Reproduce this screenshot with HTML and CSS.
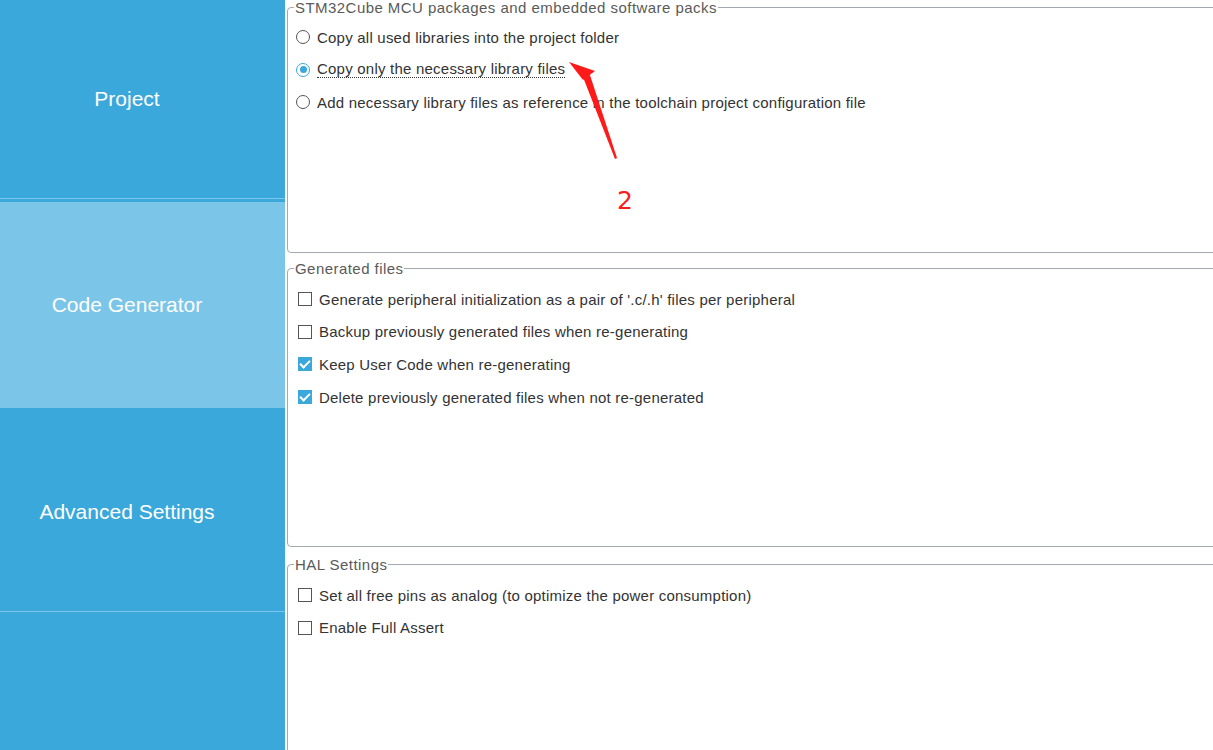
FILE: index.html
```html
<!DOCTYPE html>
<html lang="en">
<head>
  <meta charset="UTF-8">
  <title>Project Manager - Code Generator</title>
  <link rel="stylesheet" href="styles.css">
</head>
<body>
  <div class="app">
    <div class="sidebar">
      <div class="tab tab-project">Project</div>
      <div class="tab tab-active">Code Generator</div>
      <div class="tab tab-advanced">Advanced Settings</div>
      <div class="tab tab-rest"></div>
    </div>
    <div class="main">
      <fieldset class="group group-packs">
        <legend>STM32Cube MCU packages and embedded software packs</legend>
        <label class="row"><span class="radio"></span>Copy all used libraries into the project folder</label>
        <label class="row"><span class="radio on"></span><span class="focus">Copy only the necessary library files</span></label>
        <label class="row"><span class="radio"></span>Add necessary library files as reference in the toolchain project configuration file</label>
      </fieldset>
      <fieldset class="group group-files">
        <legend>Generated files</legend>
        <label class="row"><span class="check"></span>Generate peripheral initialization as a pair of '.c/.h' files per peripheral</label>
        <label class="row"><span class="check"></span>Backup previously generated files when re-generating</label>
        <label class="row"><span class="check on"></span>Keep User Code when re-generating</label>
        <label class="row"><span class="check on"></span>Delete previously generated files when not re-generated</label>
      </fieldset>
      <fieldset class="group group-hal">
        <legend>HAL Settings</legend>
        <label class="row"><span class="check"></span>Set all free pins as analog (to optimize the power consumption)</label>
        <label class="row"><span class="check"></span>Enable Full Assert</label>
      </fieldset>
      <svg class="note" width="80" height="170" viewBox="0 0 80 170">
        <polygon points="6,62 20,80 32,71" fill="#ff1a1a"/>
        <polygon points="18,72 25,69 54,158 52,159" fill="#ff1a1a"/>
      </svg>
      <div class="note-num">2</div>
    </div>
  </div>
</body>
</html>
```
FILE: styles.css
```css
body {
  margin: 0;
  font-family: "Liberation Sans", Arial, sans-serif;
  background: #fff;
  overflow: hidden;
}
.app {
  display: flex;
  height: 750px;
}
.sidebar {
  width: 285px;
  flex-shrink: 0;
  display: flex;
  flex-direction: column;
  background: #3aa8db;
}
.tab {
  display: flex;
  align-items: center;
  justify-content: center;
  padding-right: 31px;
  color: #fff;
  font-size: 21px;
  background: #3aa8db;
}
.tab-project {
  height: 198px;
  border-bottom: 1px solid #7cc6ea;
  margin-bottom: 3px;
}
.tab-active {
  height: 206px;
  background: #7bc5e8;
}
.tab-advanced {
  height: 198px;
  padding-top: 5px;
  border-bottom: 1px solid #7cc6ea;
}
.tab-rest {
  flex: 1;
}
.main {
  position: relative;
  flex: 1;
  padding-left: 2px;
  overflow: hidden;
}
.group {
  margin: 0 -12px 8px 0;
  padding: 7px 0 0 0;
  border: 1px solid #a3a9b0;
  border-radius: 4px;
  min-width: 0;
}
.group legend {
  margin-left: 6px;
  padding: 0 1px;
  font-size: 15px;
  line-height: 15px;
  letter-spacing: 0.45px;
  color: #5a5a5a;
  white-space: nowrap;
}
.group-packs {
  height: 245px;
  padding-top: 6px;
}
.group-files {
  height: 277px;
  margin-bottom: 10px;
}
.group-hal {
  height: 200px;
}
.row {
  display: flex;
  align-items: center;
  height: 32.6px;
  padding-left: 9px;
  font-size: 15px;
  letter-spacing: 0.22px;
  color: #333;
  white-space: nowrap;
}
.radio {
  width: 12px;
  height: 12px;
  margin: 0 7px 0 -1px;
  border: 1px solid #555;
  border-radius: 50%;
  background: #fff;
  position: relative;
  flex-shrink: 0;
}
.radio.on {
  border-color: #3aa8db;
}
.radio.on::after {
  content: "";
  position: absolute;
  left: 2.5px;
  top: 2.5px;
  width: 7px;
  height: 7px;
  border-radius: 50%;
  background: #3aa8db;
}
.check {
  width: 12px;
  height: 12px;
  margin: 0 7px 0 1px;
  border: 1px solid #555;
  background: #fff;
  position: relative;
  flex-shrink: 0;
}
.check.on {
  border-color: #3aa8db;
  background: #3aa8db;
}
.check.on::after {
  content: "";
  position: absolute;
  left: 3px;
  top: 0px;
  width: 4px;
  height: 8px;
  border: solid #fff;
  border-width: 0 2px 2px 0;
  transform: rotate(45deg);
}
.focus {
  border-bottom: 1px dotted #333;
  line-height: 16px;
}
.note {
  position: absolute;
  left: 278px;
  top: 0;
}
.note-num {
  position: absolute;
  left: 332px;
  top: 186px;
  font-family: "DejaVu Sans", sans-serif;
  font-size: 25px;
  color: #ff1a1a;
}
```
